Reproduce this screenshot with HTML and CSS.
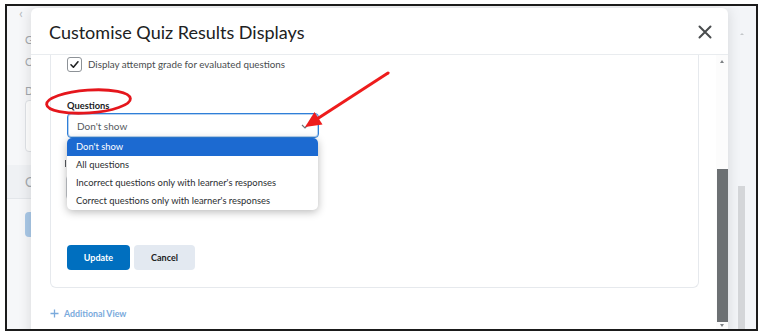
FILE: index.html
```html
<!DOCTYPE html>
<html lang="en">
<head>
<meta charset="utf-8">
<title>Customise Quiz Results Displays</title>
<link rel="stylesheet" href="styles.css">
</head>
<body>
<div class="frame">
  <div class="page">
    <div class="page-main">
      <div class="pg-back">‹</div>
      <div class="pg-label pg-g">G</div>
      <div class="pg-value">O</div>
      <div class="pg-label pg-d">D</div>
      <div class="pg-box"></div>
      <div class="pg-band">C</div>
      <div class="pg-btn"></div>
    </div>
    <div class="page-side">
      <div class="pg-arrow"></div>
      <div class="pg-scroll"></div>
    </div>
  </div>

  <div class="modal">
    <div class="modal-header">
      <h1 class="modal-title">Customise Quiz Results Displays</h1>
      <svg class="close" width="14" height="14" viewBox="0 0 14 14"><path d="M1.5 1.5 L12.5 12.5 M12.5 1.5 L1.5 12.5" stroke="#494c4e" stroke-width="2" stroke-linecap="round"/></svg>
    </div>
    <div class="modal-body">
      <div class="modal-content">
        <div class="card">
          <div class="check-row">
            <span class="checkbox"><svg width="11" height="11" viewBox="0 0 11 11"><path d="M2 5.8 L4.4 8.2 L9 2.8" fill="none" stroke="#202122" stroke-width="1.6" stroke-linecap="round" stroke-linejoin="round"/></svg></span>
            <span class="check-label">Display attempt grade for evaluated questions</span>
          </div>
          <div class="field-label">Questions</div>
          <div class="select-wrap">
            <div class="select">
              <span>Don't show</span>
              <svg class="chev" width="8" height="5" viewBox="0 0 8 5"><path d="M1 1 L4 4 L7 1" fill="none" stroke="#6e7376" stroke-width="1.2"/></svg>
            </div>
            <ul class="listbox">
              <li class="opt selected">Don't show</li>
              <li class="opt">All questions</li>
              <li class="opt">Incorrect questions only with learner's responses</li>
              <li class="opt">Correct questions only with learner's responses</li>
            </ul>
          </div>
          <div class="hidden-mark"></div>
          <div class="hidden-box"></div>
          <div class="buttons">
            <button class="btn btn-primary">Update</button>
            <button class="btn btn-secondary">Cancel</button>
          </div>
        </div>
        <div class="add-view">
          <svg width="9" height="9" viewBox="0 0 9 9"><path d="M4.5 0.5 V8.5 M0.5 4.5 H8.5" stroke="#7aaadc" stroke-width="1.3"/></svg>
          <span>Additional View</span>
        </div>
      </div>
      <div class="scrollbar">
        <div class="sb-up"></div>
        <div class="sb-thumb"></div>
        <div class="sb-down"></div>
      </div>
    </div>
  </div>

  <svg class="annot" width="753" height="327" viewBox="7 6 753 327">
    <ellipse cx="88.5" cy="101.5" rx="42" ry="11.4" transform="rotate(-4 88.5 101.5)" fill="none" stroke="#e5161c" stroke-width="2.8"/>
    <line x1="388" y1="73" x2="317" y2="119" stroke="#ee1c1c" stroke-width="3" stroke-linecap="round"/>
    <polygon points="305,127 322.5,124.5 314.5,112" fill="#ee1c1c"/>
  </svg>
</div>
</body>
</html>
```

FILE: styles.css
```css
* { box-sizing: border-box; }
body {
  margin: 0;
  background: #ffffff;
  font-family: Lato, "Open Sans", "Liberation Sans", sans-serif;
}
.frame {
  position: relative;
  margin: 4px 0 0 5px;
  width: 753px;
  height: 327px;
  border: 2px solid #1b1b1b;
  overflow: hidden;
  background: #f6f7f9;
}

/* page behind the dialog */
.page {
  display: flex;
  height: 100%;
}
.page-main {
  flex: 1;
  padding-left: 18px;
  color: #a3a8ad;
  font-size: 11px;
}
.pg-back {
  margin: 0 0 0 -6px;
  height: 14px;
  line-height: 14px;
  font-size: 14px;
  color: #b5babf;
}
.pg-label, .pg-value { height: 12px; line-height: 12px; }
.pg-g { margin-top: 14px; }
.pg-value { margin-top: 10px; }
.pg-d { margin-top: 17px; }
.pg-box {
  margin-top: 3px;
  height: 52px;
  width: 30px;
  border: 1px solid #dfe2e6;
  border-radius: 4px;
  background: #fff;
}
.pg-band {
  margin: 13px 0 0 -18px;
  padding-left: 18px;
  height: 34px;
  line-height: 34px;
  font-size: 13px;
  background: #eff1f4;
  border-bottom: 1px solid #e3e6ea;
}
.pg-btn {
  margin-top: 13px;
  width: 30px;
  height: 25px;
  border-radius: 4px;
  background: #a9c8e7;
}
.page-side {
  width: 28px;
  padding-left: 10px;
  background: #f3f5f8;
}
.pg-arrow {
  margin: 27px 0 0 2px;
  width: 0; height: 0;
  border-left: 2px solid transparent;
  border-right: 2px solid transparent;
  border-bottom: 2px solid #c4c7ca;
}
.pg-scroll {
  margin-top: 151px;
  width: 7px;
  height: 160px;
  background: #d4d6d9;
}

/* dialog */
.modal {
  position: absolute;
  left: 24px;
  top: 2px;
  width: 697px;
  height: 335px;
  background: #fff;
  border-radius: 6px;
  box-shadow: 0 0 14px rgba(0, 0, 0, 0.13);
  display: flex;
  flex-direction: column;
}
.modal-header {
  height: 47px;
  flex: none;
  border-bottom: 1px solid #e9ecef;
  display: flex;
  align-items: center;
  justify-content: space-between;
  padding: 1px 16px 0 18px;
}
.modal-title {
  margin: 0;
  font-size: 18px;
  font-weight: 400;
  color: #202122;
}
.close { display: block; }
.modal-body {
  flex: 1;
  display: flex;
  min-height: 0;
}
.modal-content {
  flex: 1;
  padding-left: 19px;
  overflow: hidden;
}
.card {
  width: 649px;
  border: 1px solid #e6e9ed;
  border-top: none;
  border-radius: 0 0 6px 6px;
  padding: 1px 16px 17px 16px;
}
.check-row {
  display: flex;
  align-items: center;
  height: 16px;
  gap: 6px;
}
.checkbox {
  width: 15px;
  height: 15px;
  border: 1px solid #8d9297;
  border-radius: 3px;
  display: flex;
  align-items: center;
  justify-content: center;
  background: #fff;
}
.checkbox svg { display: block; }
.check-label {
  font-size: 9.8px;
  color: #494c4e;
}
.field-label {
  margin-top: 28px;
  font-size: 9.3px;
  font-weight: 700;
  line-height: 12px;
  color: #202122;
}
.select-wrap {
  position: relative;
  margin-top: 1px;
  width: 252px;
}
.select {
  height: 25px;
  border: 1px solid #2f7fd8;
  box-shadow: inset 0 0 0 1px rgba(47, 127, 216, 0.35);
  border-radius: 4px;
  display: flex;
  align-items: center;
  justify-content: space-between;
  padding: 0 9px 0 9px;
  font-size: 10px;
  color: #565a5e;
  background: #fff;
}
.chev { display: block; margin-top: 1px; }
.listbox {
  position: absolute;
  left: 0;
  top: 25px;
  width: 251px;
  margin: 0;
  padding: 0;
  list-style: none;
  background: #fff;
  border-radius: 5px;
  box-shadow: 0 2px 9px rgba(0, 0, 0, 0.28);
  overflow: hidden;
  z-index: 2;
}
.opt {
  height: 18px;
  line-height: 18px;
  padding-left: 9px;
  font-size: 9.4px;
  color: #2b2e31;
}
.opt.selected {
  background: #1c6ad1;
  color: #fff;
}
.hidden-mark {
  margin: 22px 0 0 -2px;
  width: 4px;
  height: 7px;
  border-left: 1px solid #55595d;
}
.hidden-box {
  margin: 8px 0 0 -1px;
  width: 200px;
  height: 25px;
  border: 1px solid #c5c9cd;
  border-radius: 4px;
}
.buttons {
  margin-top: 45px;
  display: flex;
  gap: 4px;
}
.btn {
  height: 25px;
  border: none;
  border-radius: 4px;
  font-family: inherit;
  font-size: 9px;
  font-weight: 700;
  padding: 0;
}
.btn-primary {
  width: 63px;
  background: #006fbf;
  color: #fff;
}
.btn-secondary {
  width: 61px;
  background: #e3e9f1;
  color: #202122;
}
.add-view {
  margin-top: 17px;
  height: 16px;
  display: flex;
  align-items: center;
  gap: 5px;
  font-size: 8.8px;
  font-weight: 700;
  color: #7aaadc;
}
.add-view svg { display: block; }

/* dialog scrollbar */
.scrollbar {
  width: 12px;
  flex: none;
  padding-left: 1px;
  background: #fcfcfc;
  display: flex;
  flex-direction: column;
}
.sb-up {
  margin: 5px 0 0 3px;
  width: 0; height: 0;
  border-left: 2.5px solid transparent;
  border-right: 2.5px solid transparent;
  border-bottom: 3px solid #7d8184;
}
.sb-thumb {
  margin-top: 106px;
  width: 11px;
  height: 153px;
  background: #6c7073;
  flex: none;
}
.sb-down {
  margin: 2px 0 0 3px;
  width: 0; height: 0;
  border-left: 2.5px solid transparent;
  border-right: 2.5px solid transparent;
  border-top: 3px solid #7d8184;
}

/* annotation overlay */
.annot {
  position: absolute;
  left: 0;
  top: 0;
  pointer-events: none;
  z-index: 5;
}
```
